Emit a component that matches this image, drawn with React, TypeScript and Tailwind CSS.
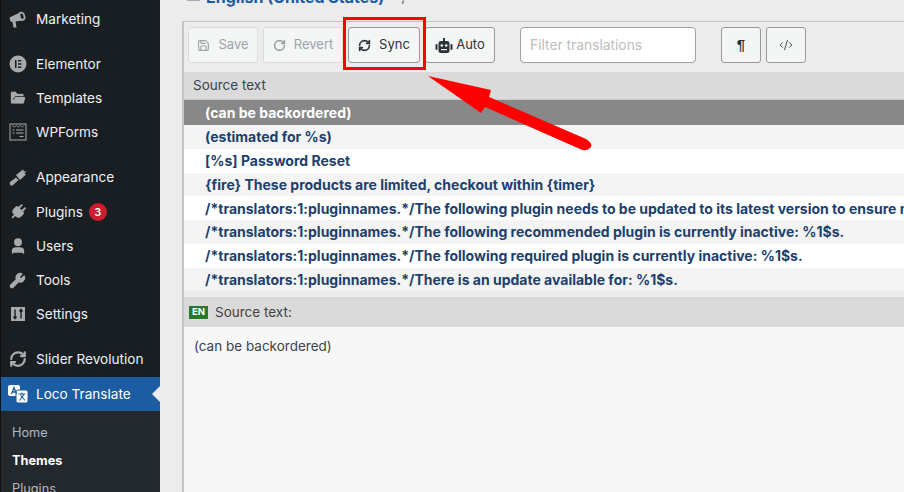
import React from 'react';
import { FolderOpen, Plug, User, Wrench, RefreshCw, Save, RotateCw, CodeXml } from 'lucide-react';

const FONT = 'font-["Inter","Liberation_Sans",sans-serif]';

const MenuItem = ({ icon, label, children }: { icon: React.ReactNode; label: string; children?: React.ReactNode }) => (
  <div className="h-[34px] flex items-center text-[13.6px] text-[#f0f0f1]">
    <span className="w-[35px] pl-[8px] flex-shrink-0 flex items-center text-[#a7aaad]">{icon}</span>
    <span>{label}</span>
    {children}
  </div>
);

const Gap = () => <div className="h-[11px]"></div>;

const ToolButton = ({ children, dim, className }: { children: React.ReactNode; dim?: boolean; className?: string }) => (
  <div
    className={`h-[36px] flex-shrink-0 flex items-center justify-center rounded-[3px] border bg-[#f4f5f5] text-[13px] ${
      dim ? 'border-[#dcdcdc] text-[#a0a3a6]' : 'border-[#9a9a9a] text-[#2c3338]'
    } ${className || ''}`}
  >
    {children}
  </div>
);

const rows = [
  '(estimated for %s)',
  '[%s] Password Reset',
  '{fire} These products are limited, checkout within {timer}',
  '/*translators:1:pluginnames.*/The following plugin needs to be updated to its latest version to ensure maximum compatibility with this theme',
  '/*translators:1:pluginnames.*/The following recommended plugin is currently inactive: %1$s.',
  '/*translators:1:pluginnames.*/The following required plugin is currently inactive: %1$s.',
  '/*translators:1:pluginnames.*/There is an update available for: %1$s.',
];

export default function App() {
  return (
    <div className={`w-[904px] h-[492px] overflow-hidden flex bg-[#ececec] relative ${FONT}`}>
      {/* Admin sidebar */}
      <div className="w-[160px] h-full flex-shrink-0 bg-[#191e22] border-l border-[#101316] pt-[2px] overflow-hidden">
        <MenuItem
          icon={
            <svg width="18" height="18" viewBox="0 0 18 18" fill="#a7aaad">
              <path d="M0.500 7.500L11 2.500L13.500 10.500L6.500 11.500L7.500 17.500H4.500L3.500 12L1.500 11.500Z" />
              <ellipse cx="13" cy="6.200" rx="3.200" ry="4.600" transform="rotate(-18 13 6.200)" />
              <ellipse cx="13" cy="6.200" rx="1.500" ry="2.800" transform="rotate(-18 13 6.200)" fill="#191e22" />
            </svg>
          }
          label="Marketing"
        />
        <Gap />
        <MenuItem
          icon={
            <svg width="18" height="18" viewBox="0 0 18 18">
              <circle cx="9" cy="9" r="8.500" fill="#a7aaad" />
              <path d="M6 5h1.500v8H6zM9 5h3.200v1.500H9zM9 8.200h3.200v1.500H9zM9 11.500h3.200V13H9z" fill="#191e22" />
            </svg>
          }
          label="Elementor"
        />
        <MenuItem icon={<FolderOpen className="w-[18px] h-[18px]" fill="#a7aaad" stroke="#191e22" strokeWidth={1} />} label="Templates" />
        <MenuItem
          icon={
            <svg width="18" height="18" viewBox="0 0 18 18" fill="none" stroke="#a7aaad">
              <rect x="1" y="1" width="16" height="16" strokeWidth="1" />
              <path d="M3 2.500l2.500 1.500 2-1.500 2 1.500 2-1.500 2 1.500 1.500-1.500" strokeWidth="0.800" />
              <path d="M3.500 7h2M7 7h7.500M3.500 10h2M7 10h7.500M10.500 13.500h4" strokeWidth="1.200" />
            </svg>
          }
          label="WPForms"
        />
        <Gap />
        <MenuItem
          icon={
            <svg width="18" height="18" viewBox="0 0 18 18" fill="#a7aaad">
              <path d="M0.500 14.500L7 9.500L9.500 12L3.500 17.500H1.500Z" />
              <path d="M7 7L14 1.500L15 3.500L17.500 3L15.500 5.500L17 6.500L11 12Z" />
            </svg>
          }
          label="Appearance"
        />
        <div className="h-px"></div>
        <MenuItem icon={<Plug className="w-[18px] h-[18px] rotate-45" fill="#a7aaad" strokeWidth={2.5} />} label="Plugins">
          <span className="ml-[6px] w-[18px] h-[18px] rounded-full bg-[#cf1b2f] text-white text-[11px] font-semibold flex items-center justify-center">
            3
          </span>
        </MenuItem>
        <MenuItem icon={<User className="w-[18px] h-[18px]" fill="#a7aaad" strokeWidth={2.5} />} label="Users" />
        <MenuItem icon={<Wrench className="w-[17px] h-[17px]" fill="#a7aaad" />} label="Tools" />
        <MenuItem
          icon={
            <svg width="18" height="18" viewBox="0 0 18 18">
              <rect x="2" y="2" width="14" height="14" fill="#a7aaad" />
              <path d="M6 4.500v9M4.500 11.500L6 13.500l1.500-2M12 13.500v-9M10.500 6.500L12 4.500l1.500 2" fill="none" stroke="#191e22" strokeWidth="1.400" />
            </svg>
          }
          label="Settings"
        />
        <Gap />
        <MenuItem icon={<RefreshCw className="w-[18px] h-[18px]" strokeWidth={3} />} label="Slider Revolution" />
        <div className="h-[34px] mt-[1px] -ml-px flex items-center bg-[#1b5ca3] text-[13.6px] text-white relative">
          <span className="w-[36px] pl-[8px] flex-shrink-0 flex items-center">
            <svg width="20" height="18" viewBox="0 0 20 18">
              <rect x="0" y="0" width="12" height="11" rx="2" fill="#fff" />
              <rect x="8" y="5" width="12" height="13" rx="2" fill="#fff" stroke="#1b5ca3" />
              <path d="M3.500 9l2.500-6.500L8.500 9M4.500 7h3" fill="none" stroke="#1b5ca3" strokeWidth="1.300" />
              <path d="M10.500 9h7M14 7.500V9M11.500 15.500l4.500-6M12.500 10l4.500 5.500" fill="none" stroke="#1b5ca3" strokeWidth="1.100" />
            </svg>
          </span>
          <span>Loco Translate</span>
          <span className="absolute right-0 top-[9px] border-y-[8px] border-y-transparent border-r-[8px] border-r-[#ececec]"></span>
        </div>
        <div className="bg-[#23282d] h-[100px] pt-[8px] pl-[12px] -ml-px text-[12.75px] text-[#b4b9be]">
          <div className="h-[28px] flex items-center">Home</div>
          <div className="h-[28px] flex items-center font-bold text-white">Themes</div>
          <div className="h-[28px] flex items-center">Plugins</div>
        </div>
      </div>

      {/* Editor column */}
      <div className="flex-1 min-w-0 pl-[22px] overflow-hidden flex flex-col">
        <div className="h-[21px] flex-shrink-0 overflow-hidden">
          <div className="-mt-[13px] flex items-start whitespace-nowrap text-[16px] leading-[20px]">
            <span className="mt-[13px] ml-[5px] w-[13px] h-px bg-[#a9a9a9] flex-shrink-0"></span>
            <span className="ml-[6px] font-bold text-[#1b5ca3]">English (United States)</span>
            <span className="ml-[17px] text-[13px] text-[#50575e]">,</span>
          </div>
        </div>
        <div className="h-[471px] flex-shrink-0 border-l-[2px] border-t border-[#c3c4c7] flex flex-col">
          {/* Toolbar */}
          <div className="h-[50px] flex items-start pl-[4px] pt-[5px] flex-shrink-0">
            <ToolButton dim className="w-[70px] gap-[8px]">
              <Save className="w-[13px] h-[13px]" />
              Save
            </ToolButton>
            <ToolButton dim className="w-[80px] ml-[5px] gap-[8px]">
              <RotateCw className="w-[13px] h-[13px]" strokeWidth={3} />
              Revert
            </ToolButton>
            <ToolButton className="w-[72px] ml-[5px] gap-[8px] text-[13.5px]">
              <RefreshCw className="w-[13px] h-[13px]" strokeWidth={3} />
              Sync
            </ToolButton>
            <ToolButton className="w-[70px] ml-[5px] gap-[3px]">
              <svg width="18" height="15" viewBox="0 0 18 15" fill="#2c3338">
                <rect x="3.500" y="3" width="11" height="12" rx="2.500" />
                <rect x="0.500" y="6" width="2" height="6" rx="1" />
                <rect x="15.500" y="6" width="2" height="6" rx="1" />
                <rect x="8" y="0" width="2" height="3" />
                <circle cx="6.800" cy="7.500" r="1.300" fill="#f4f5f5" />
                <circle cx="11.200" cy="7.500" r="1.300" fill="#f4f5f5" />
                <rect x="6" y="11" width="6" height="1.200" fill="#f4f5f5" />
              </svg>
              Auto
            </ToolButton>
            <div className="w-[176px] h-[36px] flex-shrink-0 ml-[25px] rounded-[4px] border border-[#a0a0a0] bg-white flex items-center pl-[9px] text-[13.8px] text-[#bdbdbd]">
              Filter translations
            </div>
            <ToolButton className="w-[40px] ml-[25px]">
              <span className="font-bold text-[15px] font-['Liberation_Sans']">¶</span>
            </ToolButton>
            <ToolButton className="w-[40px] ml-[5px]">
              <CodeXml className="w-[14px] h-[14px]" strokeWidth={1.5} />
            </ToolButton>
          </div>

          {/* Source list */}
          <div className="h-[28px] flex-shrink-0 bg-[#dadada] border-b border-[#c9c9c9] flex items-center pl-[9px] text-[13.5px] text-[#3c434a]">
            Source text
          </div>
          <div className="h-[25px] flex-shrink-0 bg-[#888888] flex items-center pl-[21px] text-[14px] font-bold text-white">
            (can be backordered)
          </div>
          {rows.map((r, i) => (
            <div
              key={r}
              className={`h-[23.75px] flex-shrink-0 flex items-center pl-[21px] text-[14px] font-bold text-[#1c3f6e] whitespace-nowrap ${
                i % 2 === 0 ? 'bg-[#f4f4f4]' : 'bg-white'
              }`}
            >
              {r}
            </div>
          ))}

          {/* Source editor */}
          <div className="h-[6px] flex-shrink-0 bg-[#ececec]"></div>
          <div className="h-[30px] flex-shrink-0 bg-[#dadada] flex items-center pl-[5px] text-[13.5px] text-[#3c434a]">
            <span className="w-[19px] h-[13px] bg-[#247a29] text-white text-[9.5px] font-bold flex items-center justify-center mr-[7px]">
              EN
            </span>
            Source text:
          </div>
          <div className="flex-1 bg-[#f7f7f7] pl-[10px] pt-[9px] text-[13.5px] text-[#3c434a]">
            (can be backordered)
          </div>
        </div>
      </div>

      {/* Annotation: box and arrow over the screenshot */}
      <div className="absolute left-[343px] top-[17px] w-[83px] h-[53px] border-[3px] border-[#ff0000]"></div>
      <svg className="absolute left-[420px] top-[60px]" width="200" height="100" viewBox="0 0 200 100">
        <path d="M8 16 L71 30 L69 37 L166 79 Q174 84 170 88 Q166 92 160 89 L65 47 L61 53 Z" fill="#ff0000" />
      </svg>
    </div>
  );
}
